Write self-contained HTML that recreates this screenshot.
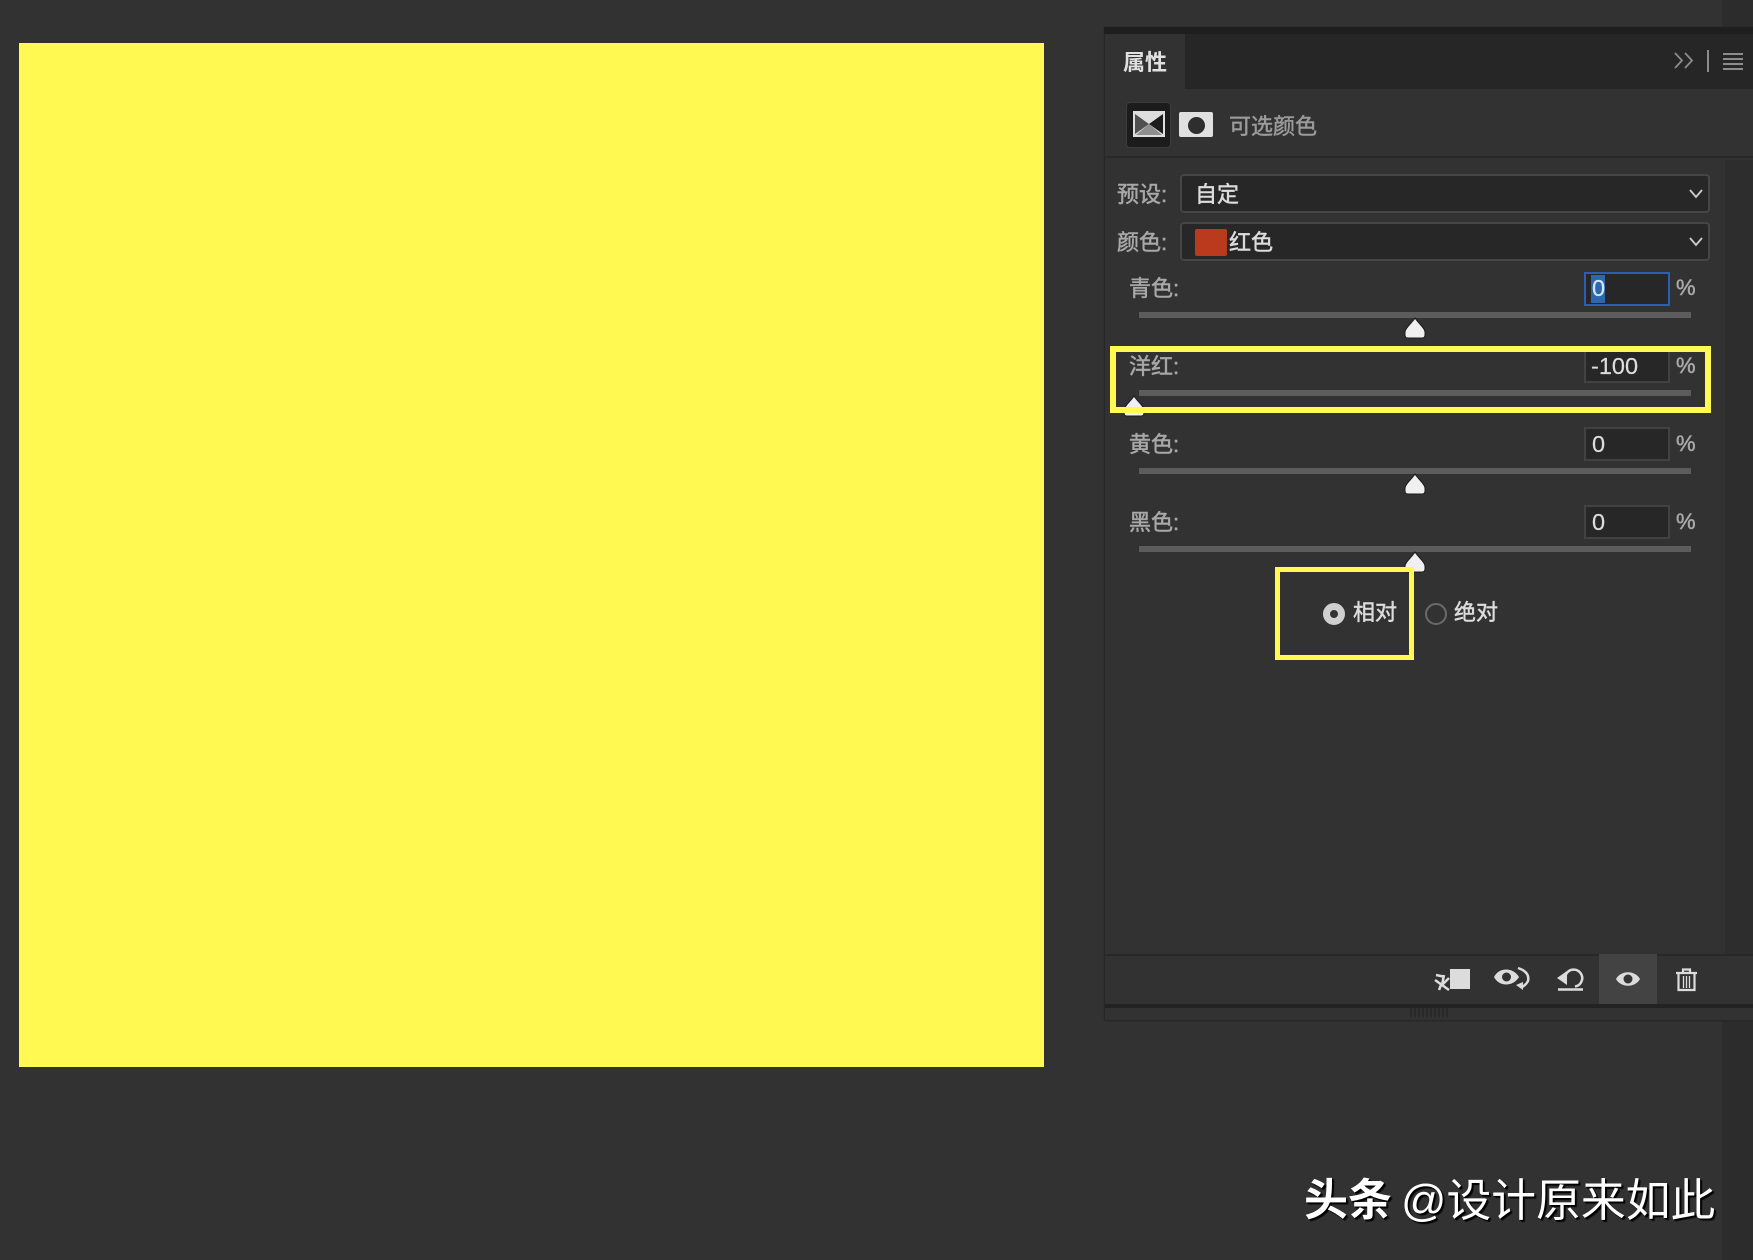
<!DOCTYPE html>
<html lang="zh"><head><meta charset="utf-8"><title>属性</title>
<style>
html,body{margin:0;padding:0;width:1753px;height:1260px;overflow:hidden;background:#323232}
body{position:relative;font-family:"Liberation Sans","Noto Sans CJK SC",sans-serif}
div,svg{position:absolute;box-sizing:border-box}
.t{white-space:nowrap;font-size:22px;line-height:30px;height:30px;-webkit-text-stroke:.5px currentColor}
.n{font-size:23.500px;-webkit-text-stroke:.2px currentColor}
.p{font-size:22px;left:1676px}
.lb{color:#a8a8a8}.v{color:#dcdcdc}
.sel{left:1179.500px;width:530.500px;height:39px;background:#272727;border:2px solid #464646;border-radius:4px}
.inp{left:1584px;width:86px;height:34px;background:#272727;border:2px solid #424242}
.sl{left:1139px;width:552px;height:6px;background:#5c5c5c}
.y{border:6px solid #fff952}
</style></head><body>
<div style="left:1722px;top:0;width:31px;height:1260px;background:#2c2c2c"></div>
<div style="left:19px;top:43px;width:1025px;height:1024px;background:#fff952"></div>

<div style="left:1105px;top:27px;width:648px;height:993px;background:#323232;box-shadow:-1px 0 1px #262626,0 1px 1px #282828"></div>
<div style="left:1104px;top:27px;width:649px;height:7px;background:#1e1e1e"></div>
<div style="left:1105px;top:34px;width:648px;height:55px;background:#262626"></div>
<div style="left:1105px;top:34px;width:80px;height:55px;background:#323232"></div>
<div class="t" style="left:1123px;top:48px;color:#e0e0e0;font-weight:bold;-webkit-text-stroke:0">属性</div>
<svg style="left:1670px;top:48px" width="78" height="26" fill="none" stroke="#8c8c8c">
<path d="M5 5l7 7.500-7 7.500M15 5l7 7.500-7 7.500" stroke-width="1.800"/>
<path d="M38 2v22" stroke-width="2"/>
<path d="M53 6h20M53 11h20M53 16h20M53 21h20" stroke-width="2"/></svg>

<div style="left:1105px;top:156px;width:648px;height:2px;background:#282828"></div>
<div style="left:1127px;top:103px;width:43px;height:44px;background:#1c1c1c;border-radius:3px;box-shadow:0 0 0 1px #3c3c3c"></div>
<svg style="left:1133px;top:111px" width="32" height="26">
<rect width="32" height="26" fill="#dedede"/>
<path d="M2 3L16 13L2 23Z" fill="#505050"/><path d="M30 3L16 13L30 23Z" fill="#1c1c1c"/>
<path d="M3 24L16 13L29 24Z" fill="#8e8e8e"/></svg>
<div style="left:1179px;top:112px;width:34px;height:25px;background:#e0e0e0;border-radius:2px"></div>
<div style="left:1188px;top:116.500px;width:17px;height:17px;background:#2e2e2e;border-radius:50%"></div>
<div class="t" style="left:1229px;top:112px;color:#9a9a9a">可选颜色</div>

<div style="left:1725px;top:160px;width:28px;height:795px;background:#2d2d2d"></div>

<div class="t lb" style="left:1117px;top:180px">预设:</div>
<div class="sel" style="top:174px"></div>
<div class="t v" style="left:1195px;top:180px">自定</div>
<svg style="left:1688px;top:186px" width="16" height="16" fill="none" stroke="#cfcfcf" stroke-width="1.800"><path d="M2 4l6 7 6-7"/></svg>

<div class="t lb" style="left:1117px;top:228px">颜色:</div>
<div class="sel" style="top:222px"></div>
<div style="left:1195px;top:229px;width:32px;height:27px;background:#b93a1c;border-radius:2px"></div>
<div class="t v" style="left:1229px;top:228px">红色</div>
<svg style="left:1688px;top:234px" width="16" height="16" fill="none" stroke="#cfcfcf" stroke-width="1.800"><path d="M2 4l6 7 6-7"/></svg>

<div class="t lb" style="left:1129px;top:274px">青色:</div>
<div class="inp" style="top:272px;border-color:#2b5fb4"></div>
<div style="left:1591px;top:275px;width:14px;height:28px;background:#2c68b0"></div>
<div class="t n" style="left:1592px;top:273px;color:#d8e4f2">0</div>
<div class="t lb p" style="top:273px">%</div>
<div class="sl" style="top:312px"></div>

<div class="t lb" style="left:1129px;top:352px">洋红:</div>
<div class="inp" style="top:349px"></div>
<div class="t v n" style="left:1591px;top:351px">-100</div>
<div class="t lb p" style="top:351px">%</div>
<div class="sl" style="top:390px"></div>

<div class="t lb" style="left:1129px;top:430px">黄色:</div>
<div class="inp" style="top:427px"></div>
<div class="t v n" style="left:1592px;top:429px">0</div>
<div class="t lb p" style="top:429px">%</div>
<div class="sl" style="top:468px"></div>

<div class="t lb" style="left:1129px;top:508px">黑色:</div>
<div class="inp" style="top:505px"></div>
<div class="t v n" style="left:1592px;top:507px">0</div>
<div class="t lb p" style="top:507px">%</div>
<div class="sl" style="top:546px"></div>

<svg style="left:0;top:0" width="1753" height="1260">
<defs><path id="th" d="M0 0C3 5 10 10 10 14V17Q10 20 7 20H-7Q-10 20-10 17V14C-10 10-3 5 0 0Z" fill="#f0f0f0" stroke="#1c1c1c" stroke-width="1"/></defs>
<use href="#th" transform="translate(1415 318)"/>
<use href="#th" transform="translate(1134 396)"/>
<use href="#th" transform="translate(1415 474)"/>
<use href="#th" transform="translate(1415 552)"/>
</svg>

<div class="y" style="left:1110px;top:346px;width:601px;height:67px"></div>
<div class="y" style="left:1274.500px;top:567px;width:139px;height:93px;border-width:5.500px"></div>

<div style="left:1323px;top:603px;width:22px;height:22px;border-radius:50%;border:7px solid #cfcfcf;background:#323232"></div>
<div class="t v" style="left:1353px;top:598px">相对</div>
<div style="left:1425px;top:603px;width:22px;height:22px;border-radius:50%;border:2px solid #6a6a6a"></div>
<div class="t v" style="left:1454px;top:598px">绝对</div>

<div style="left:1105px;top:954px;width:648px;height:2px;background:#272727"></div>
<div style="left:1105px;top:1004px;width:648px;height:4px;background:#232323"></div>
<div style="left:1599px;top:954px;width:58px;height:50px;background:#434343"></div>

<svg style="left:1410px;top:1008px" width="40" height="9" stroke="#252525" stroke-width="1.500">
<path d="M1 0v9M5 0v9M9 0v9M13 0v9M17 0v9M21 0v9M25 0v9M29 0v9M33 0v9M37 0v9"/></svg>

<svg style="left:0;top:0" width="1753" height="1260" fill="none" stroke="#dcdcdc">
<rect x="1450" y="969" width="20" height="20" fill="#dcdcdc" stroke="none"/>
<path d="M1436 975l7 1.500M1444 975l-2 10M1435 980l14 10M1449 978l-7 7M1441 985l-2 5" stroke-width="2.500"/>
<path d="M1494 977C1499 967 1513 967 1519 977C1513 987 1499 987 1494 977Z" fill="#dcdcdc" stroke="none"/>
<circle cx="1506.500" cy="977" r="4.500" fill="#323232" stroke="none"/>
<path d="M1518 968Q1530 972 1528 981Q1526 985 1522 987" stroke-width="2.500"/>
<path d="M1516 985l7-3v8z" fill="#dcdcdc" stroke="none"/>
<path d="M1566 974.500A8.500 8.500 0 1 1 1575 986.500" stroke-width="2.500"/>
<path d="M1557 978L1567 971V985Z" fill="#dcdcdc" stroke="none"/>
<path d="M1558 989.500h25" stroke-width="2.500"/>
<path d="M1616 979C1621 970 1635 970 1640 979C1635 988 1621 988 1616 979Z" fill="#dcdcdc" stroke="none"/>
<circle cx="1628" cy="979" r="4.500" fill="#343434" stroke="none"/>
<path d="M1676 973h21M1683 973v-3.500h7v3.500" stroke-width="2.200"/>
<path d="M1678.500 974v16h16v-16" stroke-width="2.200"/>
<path d="M1683.500 976v12M1686.500 976v12M1689.500 976v12" stroke-width="1.300"/>
</svg>

<div class="t" style="left:1304px;top:1173px;height:56px;line-height:56px;font-size:44px;font-weight:bold;color:#fff;-webkit-text-stroke:0;text-shadow:2px 2px 1px #000,1px 1px 0 #000">头条</div>
<div class="t" style="left:1401px;top:1173px;height:56px;line-height:56px;font-size:44.800px;color:#fff;-webkit-text-stroke:0;text-shadow:2px 2px 1px #000,1px 1px 0 #000">@设计原来如此</div>
</body></html>
